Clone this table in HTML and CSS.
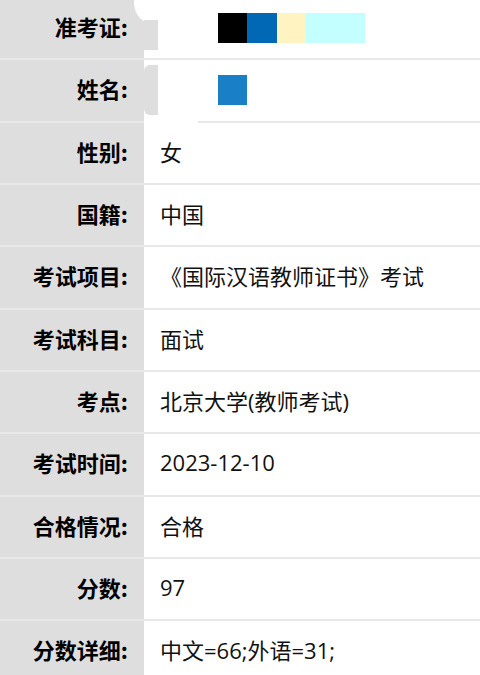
FILE: index.html
```html
<!DOCTYPE html>
<html lang="zh-CN">
<head>
  <meta charset="UTF-8">
  <meta name="viewport" content="width=device-width, initial-scale=1.0">
  <title>考试成绩</title>
  <link rel="stylesheet" href="styles.css">
</head>
<body>
<div class="sheet">
  <div class="row first">
    <div class="label">准考证:</div>
    <div class="value">
      <span class="chip black"></span><span class="chip blue"></span><span class="chip cream"></span><span class="chip cyan"></span>
    </div>
    <span class="blob"></span>
    <span class="patch patch-one"></span>
  </div>
  <div class="row second">
    <div class="label">姓名:</div>
    <div class="value">
      <span class="chip sky"></span>
    </div>
    <span class="patch patch-two"></span>
    <span class="gap"></span>
  </div>
  <div class="row">
    <div class="label">性别:</div>
    <div class="value">女</div>
  </div>
  <div class="row">
    <div class="label">国籍:</div>
    <div class="value">中国</div>
  </div>
  <div class="row">
    <div class="label">考试项目:</div>
    <div class="value">《国际汉语教师证书》考试</div>
  </div>
  <div class="row">
    <div class="label">考试科目:</div>
    <div class="value">面试</div>
  </div>
  <div class="row">
    <div class="label">考点:</div>
    <div class="value">北京大学(教师考试)</div>
  </div>
  <div class="row">
    <div class="label">考试时间:</div>
    <div class="value">2023-12-10</div>
  </div>
  <div class="row">
    <div class="label">合格情况:</div>
    <div class="value">合格</div>
  </div>
  <div class="row">
    <div class="label">分数:</div>
    <div class="value">97</div>
  </div>
  <div class="row">
    <div class="label">分数详细:</div>
    <div class="value">中文=66;外语=31;</div>
  </div>
</div>
</body>
</html>
```

FILE: styles.css
```css
html, body {
  margin: 0;
  height: 100%;
  overflow: hidden;
  background: white;
}
body {
  font-family: "Noto Sans CJK SC", "Noto Sans", sans-serif;
  color: #111;
}
.sheet {
  margin-top: -2px;
}
.row {
  position: relative;
  display: grid;
  grid-template-columns: 144px 1fr;
  height: 60.33px;
  border-bottom: 2px solid rgba(0, 0, 0, 0.09);
}
.label {
  background-color: #dedede;
  font-size: 22px;
  font-weight: 700;
  padding: 0 16px 4px 0;
  display: flex;
  align-items: center;
  justify-content: flex-end;
  color: #000;
}
.value {
  padding: 0 0 4px 16px;
  font-family: "Open Sans", "Noto Sans CJK SC", sans-serif;
  font-size: 22px;
  display: flex;
  align-items: center;
}
/* redacted blocks */
.chip {
  display: inline-block;
  width: 29px;
  height: 30px;
}
.first .value,
.second .value {
  padding: 0 0 0 74px;
}
.black { background-color: #000; }
.blue { background-color: #0068b4; width: 30px; }
.cream { background-color: #fff3c1; }
.cyan { background-color: #c4ffff; width: 59px; }
.sky { background-color: #1a80c5; }
/* smudges left by the redaction */
.blob {
  position: absolute;
  left: 134px;
  top: -17px;
  width: 44px;
  height: 44px;
  border-radius: 50%;
  background: white;
}
.patch {
  position: absolute;
  left: 144px;
  width: 14px;
  background: #dedede;
}
.patch-one {
  top: 22px;
  height: 30px;
}
.patch-two {
  top: 5px;
  height: 50px;
  border-radius: 6px 0 0 6px;
}
.gap {
  position: absolute;
  left: 144px;
  bottom: -2px;
  width: 54px;
  height: 2px;
  background: white;
}
```
